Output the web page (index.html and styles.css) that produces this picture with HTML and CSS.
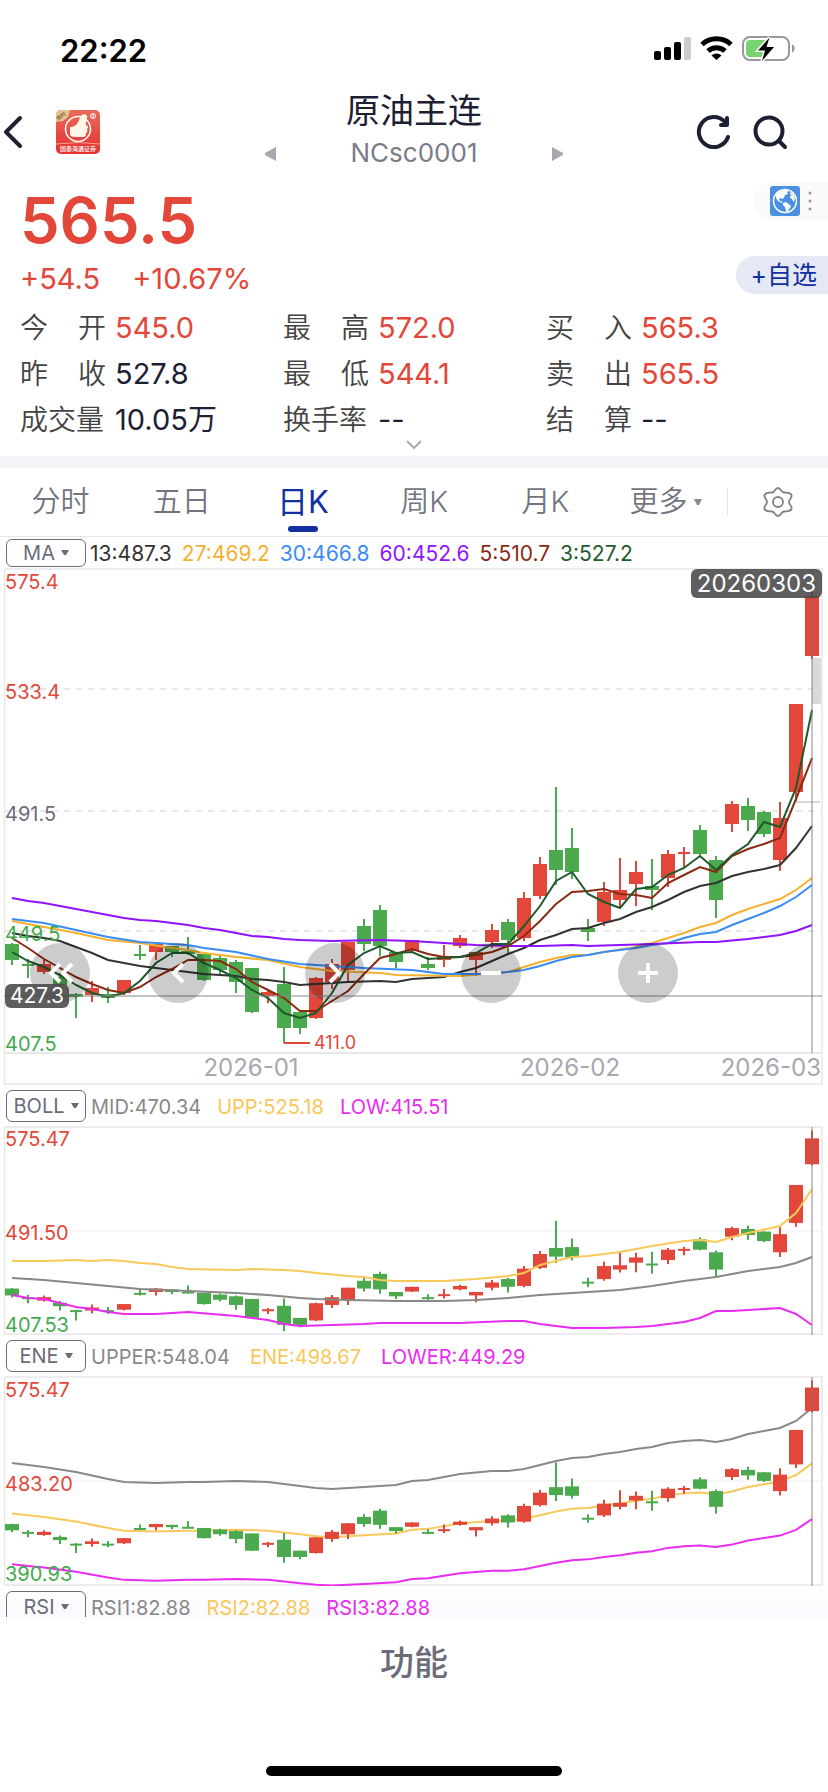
FILE: index.html
```html
<!DOCTYPE html>
<html lang="zh-CN">
<head>
<meta charset="utf-8">
<meta name="viewport" content="width=device-width, initial-scale=1">
<title>原油主连 NCsc0001</title>
<link rel="stylesheet" href="styles.css">
</head>
<body>
<div class="status">
  <time class="clock">22:22</time>
  <svg class="status-icons" width="144" height="28" viewBox="0 0 144 28" aria-hidden="true">
    <g fill="#000"><rect x="1" y="15" width="7" height="9" rx="2"/><rect x="11" y="11" width="7" height="13" rx="2"/><rect x="21" y="6" width="7" height="18" rx="2"/></g>
    <rect x="31" y="1" width="7" height="23" rx="2" fill="#ccc"/>
    <g fill="none" stroke="#000" stroke-width="5"><path d="M49 8.500a21.500 21.500 0 0 1 29 0"/><path d="M55 15a12.500 12.500 0 0 1 17 0"/></g>
    <path d="M58.500 19.500a7 7 0 0 1 10 0L63.500 24Z"/>
    <rect x="90" y="1" width="46" height="23" rx="7" fill="none" stroke="#999" stroke-width="2"/>
    <path d="M97 4h18v17H97a4 4 0 0 1-4-4V8a4 4 0 0 1 4-4Z" fill="#76d572"/>
    <path d="M139 8.500c3.500 1 3.500 7 0 8Z" fill="#999"/>
    <path d="M116.500 1.500 105 14.500h7l-3 10.500 12-14h-7.500Z" fill="#000" stroke="#fff" stroke-width="3" paint-order="stroke"/>
  </svg>
</div>

<header class="header">
  <div class="header-side">
    <button class="icon-btn" aria-label="返回"><svg width="24" height="36" viewBox="0 0 24 36"><path d="M20 4 6 18l14 14" fill="none" stroke="#1d2033" stroke-width="4" stroke-linecap="round" stroke-linejoin="round"/></svg></button>
    <svg class="logo" width="44" height="44" viewBox="0 0 44 44" role="img" aria-label="国泰海通证券">
      <defs><linearGradient id="lg" x2="0" y2="1"><stop stop-color="#ea6a5c"/><stop offset="1" stop-color="#e5302e"/></linearGradient><clipPath id="lc"><rect width="44" height="44" rx="5"/></clipPath></defs>
      <g clip-path="url(#lc)">
        <rect width="44" height="44" fill="url(#lg)"/>
        <path d="M0 0h14L12 7 7 11 0 12Z" fill="#e3c48c"/>
        <text class="logo-tag" x="1" y="9" transform="rotate(-38 4 8)">限时</text>
        <circle cx="22" cy="19" r="12.500" fill="none" stroke="#fff" stroke-width="1.500"/>
        <path d="M15 17c4 0 8-4 9-10 1-3 6-4 7-1 1 3-2 6-1 9 3 1 2 3 1 4 1 2 0 4-1 4 0 3-1 4-3 4H19c-3 0-5-1-5-3v-7Z" fill="#fff6ea"/>
        <circle cx="37" cy="6" r="2.500" fill="none" stroke="#fff"/><path d="M37 4v4" stroke="#fff"/>
        <path d="M0 34q22-3 44 0" fill="none" stroke="#ffb9a9" stroke-width=".800"/>
        <text class="logo-name" x="22" y="41" text-anchor="middle">国泰海通证券</text>
      </g>
    </svg>
  </div>
  <div class="header-title">
    <button class="step" aria-label="上一个"><svg width="12" height="14" viewBox="0 0 12 14"><path d="M11 0v14L0 8V6Z" fill="#a6a7af"/></svg></button>
    <div class="names"><h1 class="name">原油主连</h1><span class="code">NCsc0001</span></div>
    <button class="step" aria-label="下一个"><svg width="12" height="14" viewBox="0 0 12 14"><path d="M1 0v14l11-6V6Z" fill="#a6a7af"/></svg></button>
  </div>
  <div class="header-side header-actions">
    <button class="icon-btn" aria-label="刷新"><svg width="36" height="36" viewBox="0 0 36 36"><g fill="none" stroke="#1d2033" stroke-width="4" stroke-linecap="round" stroke-linejoin="round"><path d="M32 23a15 15 0 1 1-3-15"/><path d="M31 4v7h-6" /></g></svg></button>
    <button class="icon-btn" aria-label="搜索"><svg width="36" height="36" viewBox="0 0 36 36"><g fill="none" stroke="#1d2033" stroke-width="4" stroke-linecap="round"><circle cx="17" cy="17" r="13.500"/><path d="m27 27 6 6"/></g></svg></button>
  </div>
</header>

<main>
<section class="quote">
  <div class="quote-top">
    <div>
      <div class="price">565.5</div>
      <div class="change"><span>+54.5</span><span>+10.67%</span></div>
    </div>
    <div class="quote-actions">
      <button class="world" aria-label="全球行情">
        <svg width="30" height="30" viewBox="0 0 30 30"><rect width="30" height="30" rx="3" fill="#4a90e2"/><circle cx="15" cy="15" r="11.500" fill="none" stroke="#fff" stroke-width="1.500"/><path d="M6 9c2-3 5-5 8-5l3 0 2 1-2 1 1 2-3 1-1 3-2 1-1-1-2 1 1 2 3 1-1 1-4-2-2-3ZM20 6l3 2 2 4-1 4-1-1-1-2-2-1v-2l2-1-2-1ZM13 17l3-1 5 4-1 2-3 4-1-1-1-4-2-2Z" fill="#fff"/></svg>
        <svg width="4" height="22" viewBox="0 0 4 22"><g fill="#999"><circle cx="2" cy="3" r="1.500"/><circle cx="2" cy="11" r="1.500"/><circle cx="2" cy="19" r="1.500"/></g></svg>
      </button>
      <button class="fav">+自选</button>
    </div>
  </div>
  <dl class="stats">
    <div class="stat"><dt><span>今</span><span>开</span></dt><dd class="up">545.0</dd></div>
    <div class="stat"><dt><span>最</span><span>高</span></dt><dd class="up">572.0</dd></div>
    <div class="stat"><dt><span>买</span><span>入</span></dt><dd class="up">565.3</dd></div>
    <div class="stat"><dt><span>昨</span><span>收</span></dt><dd>527.8</dd></div>
    <div class="stat"><dt><span>最</span><span>低</span></dt><dd class="up">544.1</dd></div>
    <div class="stat"><dt><span>卖</span><span>出</span></dt><dd class="up">565.5</dd></div>
    <div class="stat"><dt>成交量</dt><dd>10.05万</dd></div>
    <div class="stat"><dt>换手率</dt><dd>--</dd></div>
    <div class="stat"><dt><span>结</span><span>算</span></dt><dd>--</dd></div>
  </dl>
  <button class="expand" aria-label="展开"><svg width="16" height="10" viewBox="0 0 16 10"><path d="m1 1 7 7 7-7" fill="none" stroke="#aaa" stroke-width="2"/></svg></button>
</section>

<nav class="tabs">
  <button class="tab">分时</button>
  <button class="tab">五日</button>
  <button class="tab active">日K</button>
  <button class="tab">周K</button>
  <button class="tab">月K</button>
  <button class="tab more">更多<svg width="10" height="8" viewBox="0 0 10 8"><path d="M1 1h8L6 7H4Z" fill="#8a8a8e"/></svg></button>
  <button class="settings" aria-label="设置"><svg width="30" height="30" viewBox="0 0 30 30"><g fill="none" stroke="#808088" stroke-width="1.800" stroke-linejoin="round"><path d="M15 1C18 1 18 5 21 5.500 24 6 27 5 28.500 8 29.500 11 26 12 26 15s3.500 4 2.500 7C27 25 24 24 21 24.500 18 25 18 29 15 29S12 25 9 24.500C6 24 3 25 1.500 22 .5 19 4 18 4 15S.5 11 1.500 8C3 5 6 6 9 5.500 12 5 12 1 15 1Z"/><circle cx="15" cy="15" r="5"/></g></svg></button>
</nav>

<section class="panel">
  <div class="legend legend-main"><button class="picker">MA<svg width="8" height="6" viewBox="0 0 8 6"><path d="M0 0h8L5 5H3Z" fill="#6b6c7b"/></svg></button>
    <span class="black">13:487.3</span><span class="orange">27:469.2</span><span class="blue">30:466.8</span><span class="purple">60:452.6</span><span class="brown">5:510.7</span><span class="green">3:527.2</span></div>
  <div class="chart">
    <svg id="main-chart" viewBox="0 568 828 517"></svg>
    <button class="round b1" aria-label="最左"><svg width="30" height="30" viewBox="0 0 30 30"><path d="M15 6 6 15l9 9M27 6l-9 9 9 9"/></svg></button>
    <button class="round b2" aria-label="左移"><svg width="30" height="30" viewBox="0 0 30 30"><path d="M20 6l-9 9 9 9"/></svg></button>
    <button class="round b3" aria-label="右移"><svg width="30" height="30" viewBox="0 0 30 30"><path d="m10 6 9 9-9 9"/></svg></button>
    <button class="round b4" aria-label="缩小"><svg width="30" height="30" viewBox="0 0 30 30"><path d="M5 15h20"/></svg></button>
    <button class="round b5" aria-label="放大"><svg width="30" height="30" viewBox="0 0 30 30"><path d="M5 15h20M15 5v20"/></svg></button>
    <span class="tip tip-date">20260303</span>
    <span class="tip tip-price">427.3</span>
  </div>
</section>

<section class="panel">
  <div class="legend"><button class="picker">BOLL<svg width="8" height="6" viewBox="0 0 8 6"><path d="M0 0h8L5 5H3Z" fill="#6b6c7b"/></svg></button>
    <span class="gray">MID:470.34</span><span class="gold">UPP:525.18</span><span class="magenta">LOW:415.51</span></div>
  <div class="chart"><svg id="boll-chart" viewBox="0 1126 828 209"></svg></div>
</section>

<section class="panel">
  <div class="legend"><button class="picker">ENE<svg width="8" height="6" viewBox="0 0 8 6"><path d="M0 0h8L5 5H3Z" fill="#6b6c7b"/></svg></button>
    <span class="gray wide">UPPER:548.04</span><span class="gold wide">ENE:498.67</span><span class="magenta">LOWER:449.29</span></div>
  <div class="chart"><svg id="ene-chart" viewBox="0 1376 828 210"></svg></div>
</section>

<section class="panel cut">
  <div class="legend"><button class="picker">RSI<svg width="8" height="6" viewBox="0 0 8 6"><path d="M0 0h8L5 5H3Z" fill="#6b6c7b"/></svg></button>
    <span class="gray">RSI1:82.88</span><span class="gold">RSI2:82.88</span><span class="magenta">RSI3:82.88</span></div>
</section>
</main>

<footer class="footer">
  <button class="func">功能</button>
  <div class="home-bar"></div>
</footer>
<script src="chart.js"></script>
</body>
</html>
```

FILE: styles.css
```css
* { box-sizing: border-box; }
body {
  margin: 0;
  min-height: 100vh;
  display: flex;
  flex-direction: column;
  background: #fff;
  color: #1d2033;
  font-family: Inter, "Noto Sans CJK SC", sans-serif;
}
button {
  margin: 0;
  padding: 0;
  border: 0;
  background: none;
  color: inherit;
  font: inherit;
}
svg { display: block; }

.status {
  display: flex;
  align-items: center;
  justify-content: space-between;
  height: 100px;
  padding: 0 31px 0 60px;
}
.clock { color: #000; font-size: 31px; font-weight: 600; }

.header {
  display: grid;
  grid-template-columns: 1fr auto 1fr;
  align-items: center;
  height: 76px;
  padding: 0 40px 0 0;
}
.header-side { display: flex; align-items: center; gap: 32px; margin-top: -12px; }
.header-actions { justify-content: flex-end; gap: 20px; }
.header-title { display: flex; align-items: flex-end; gap: 69px; margin: -6px 0 0 40px; }
.names { display: flex; flex-direction: column; align-items: center; }
.name { margin: -8px 0 0; font-size: 34px; line-height: 44px; font-weight: 400; }
.code { color: #7b7c88; font-size: 26px; line-height: 40px; }
.step { height: 38px; }
.logo-tag { font-size: 5px; fill: #5a3a18; }
.logo-name { font-size: 6px; font-weight: 500; fill: #fff; }

.quote { border-bottom: 12px solid #f4f5f9; height: 292px; display: flex; flex-direction: column; }
.quote-top { display: flex; justify-content: space-between; padding-left: 20px; }
.price { color: #e2473a; font-size: 63px; line-height: 76px; font-weight: 600; padding-top: 6px; }
.change { display: flex; gap: 32px; color: #e2473a; font-size: 29px; line-height: 42px; }
.quote-actions { display: flex; flex-direction: column; align-items: flex-end; gap: 36px; padding-top: 6px; }
.world {
  display: flex;
  align-items: center;
  gap: 8px;
  height: 38px;
  padding: 0 16px;
  border-radius: 20px 0 0 20px;
  background: #fafafa;
}
.fav {
  height: 38px;
  padding: 0 11px 0 14px;
  border-radius: 20px 0 0 20px;
  background: #e5e8f5;
  color: #1230a0;
  font-size: 25px;
  line-height: 38px;
}
.stats {
  display: grid;
  grid-template-columns: repeat(3, 1fr);
  margin: 5px 19px 0 20px;
  font-size: 28px;
  line-height: 46px;
}
.stat { display: flex; gap: 9px; height: 46px; }
dt { display: flex; justify-content: space-between; width: 86px; color: #444; font-weight: 350; }
dd { margin: 0; font-size: 29px; }
.up { color: #e2473a; }
.expand { align-self: center; margin-top: -3px; }

.tabs { display: flex; align-items: center; height: 69px; border-bottom: 1px solid #e6e6e8; }
.tab {
  display: flex;
  flex: 1;
  flex-direction: column;
  align-items: center;
  height: 68px;
  color: #73747f;
  font-size: 29px;
  font-weight: 350;
  line-height: 68px;
}
.tab.active { color: #1230a0; font-size: 31px; font-weight: 400; }
.tab.active::after { content: ""; width: 30px; height: 6px; margin-top: -10px; border-radius: 3px; background: #1230a0; }
.tab.more { flex-direction: row; justify-content: center; gap: 6px; }
.settings { display: flex; justify-content: center; align-items: center; width: 101px; height: 28px; border-left: 1px solid #e6e6e8; }

.legend { display: flex; align-items: center; gap: 16px; height: 41px; padding-left: 6px; font-size: 20px; line-height: 20px; white-space: nowrap; }
.legend span { padding-top: 2px; }
.legend-main { gap: 10px; height: 31px; }
.picker {
  display: flex;
  flex: none;
  align-items: center;
  justify-content: center;
  gap: 6px;
  width: 80px;
  height: 32px;
  margin-right: -11px;
  border: 1px solid #6b6c7b;
  border-radius: 6px;
  color: #6b6c7b;
}
.legend-main .picker { height: 28px; margin-right: -6px; }
.legend-main span { font-size: 21px; }
.wide { margin-right: 4px; }
.black { color: #333; }
.orange { color: #f5b02e; }
.blue { color: #3a8cf5; }
.purple { color: #9013fe; }
.brown { color: #8b2a12; }
.green { color: #1e5a2c; }
.gray { color: #888; }
.gold { color: #f8c85a; }
.magenta { color: #e82df0; }

.chart { position: relative; }
.chart > svg { width: 100%; height: auto; }
.axis { font-size: 20px; }
.axis-date { font-size: 24px; fill: #a6a7af; }
.low-mark { font-size: 18px; fill: #e2473a; }
.round {
  position: absolute;
  top: 72.5%;
  display: grid;
  place-items: center;
  width: 60px;
  height: 60px;
  border-radius: 50%;
  background: rgba(0, 0, 0, .2);
}
.round path { fill: none; stroke: #fff; stroke-width: 4; }
.b1 { left: 3.6%; }
.b2 { left: 17.9%; }
.b3 { left: 36.8%; }
.b4 { left: 55.7%; }
.b5 { left: 74.6%; }
.tip {
  position: absolute;
  border-radius: 6px;
  background: rgba(70, 70, 70, .87);
  color: #fff;
  text-align: center;
}
.tip-date { top: 1px; right: 6px; padding: 1px 6px 0; font-size: 24px; line-height: 28px; }
.tip-price { top: 80.5%; left: 5px; padding: 0 5px; font-size: 21px; line-height: 24px; }

.cut { height: 31px; overflow: hidden; background: linear-gradient(#fff, #fafafe); }
.footer {
  display: flex;
  flex: 1;
  flex-direction: column;
  align-items: center;
  justify-content: space-between;
  padding: 20px 0 16px;
}
.func { color: #6b6c7b; font-size: 34px; line-height: 52px; font-weight: 500; }
.home-bar { width: 296px; height: 10px; border-radius: 5px; background: #000; }
```

FILE: chart.js
```js
// Each candle: direction, high, body top, body bottom, low, in main chart units.
const candles = `g 943 944 960 965|g 959 964 966 978|r 960 964 972 974|g 973 977 985 995|g 993 994 997 1018|r 981 988 995 1002|g 987 994 998 1003|r 980 980 993 995|g 945 954 956 960|r 943 944 952 960|g 946 946 952 957|g 937 951 954 955|g 954 954 980 981|g 956 958 970 974|g 960 962 982 993|g 968 968 1012 1013|r 989 992 996 1003|g 967 984 1028 1043|g 1012 1012 1028 1034|r 977 978 1018 1019|r 959 964 982 989|r 942 942 970 982|g 919 926 944 951|g 905 910 946 956|g 952 952 962 968|r 940 940 951 952|g 957 964 968 970|r 945 957 960 967|r 935 938 946 948|r 952 952 960 976|r 924 930 942 948|g 919 922 940 953|r 892 898 938 941|r 857 864 896 899|g 787 850 870 885|g 828 848 872 879|g 919 928 932 941|r 882 892 922 926|r 858 890 900 907|r 861 872 884 906|g 859 886 890 910|r 850 854 878 887|r 847 852 854 867|g 825 830 854 855|g 856 860 900 918|r 801 804 824 832|g 798 806 820 831|g 811 812 834 837|r 802 818 860 871|r 704 704 792 801|r 578 596 656 659`
  .split('|').map(s => { const [c, ...v] = s.split(' '); return [c, ...v.map(Number)]; });

const parse = s => s.split(' ').map(p => p.split(':').map(Number));

const averages = [
  ['#333', '12:933 28:936 44:938 60:941 76:947 92:953 108:960 124:963 140:966 156:968 172:970 204:974 236:976 252:979 268:980 284:982 300:985 316:984 332:983 348:982 380:981 396:982 412:979 428:978 444:977 460:972 476:968 492:961 508:954 524:948 540:940 556:935 572:929 588:928 604:923 620:919 636:912 652:907 668:900 684:892 700:886 716:883 732:876 748:872 764:869 780:865 796:848 812:826'],
  ['#f5b02e', '12:921 44:927 60:930 76:933 108:940 140:943 172:948 188:950 204:953 236:957 268:960 300:967 332:971 380:973 396:975 460:976 508:972 524:967 540:962 556:958 572:955 588:955 604:952 636:947 652:943 668:938 684:933 700:927 716:923 732:915 748:909 764:904 780:899 796:890 812:878'],
  ['#3a8cf5', '12:919 44:923 76:930 108:937 140:942 172:944 188:945 204:948 236:952 268:959 300:964 332:966 364:968 412:970 444:974 480:974 508:972 524:970 540:966 556:961 572:957 588:955 604:952 636:948 652:945 668:943 684:938 700:934 716:932 732:925 748:919 764:913 780:906 796:897 812:885'],
  ['#9013fe', '12:898 28:901 44:903 60:906 76:909 92:912 108:915 124:918 140:920 156:921 172:923 188:925 204:928 220:930 236:933 252:936 268:937 284:939 300:940 332:941 380:940 412:941 444:943 476:945 508:946 540:946 572:945 588:946 620:945 652:944 700:942 716:942 748:939 780:935 796:931 812:925'],
  ['#8b2a12', '12:938 28:948 44:959 60:968 76:977 92:984 108:990 124:993 140:987 156:977 172:969 188:960 204:960 220:961 236:969 252:982 268:990 284:998 300:1011 316:1011 332:1001 348:991 364:974 380:958 396:954 412:949 428:954 444:957 460:957 476:955 492:952 508:946 524:936 540:921 556:904 572:892 588:891 604:889 620:894 636:895 652:898 668:883 684:875 700:867 716:872 732:856 748:849 764:844 780:838 796:799 812:758'],
  ['#1e5a2c', '12:952 28:961 44:967 60:975 76:985 92:993 108:997 124:993 140:981 156:963 172:953 188:953 204:963 220:970 236:978 252:990 268:998 284:1013 300:1018 316:1013 332:993 348:965 364:953 380:946 396:953 412:952 428:959 444:958 460:957 476:953 492:944 508:944 524:926 540:906 556:881 572:872 588:894 604:902 620:908 636:889 652:887 668:875 684:868 700:856 716:870 732:855 748:844 764:822 780:827 796:788 812:710'],
];
const boll = [
  ['#f8c85a', '12:1261 44:1261 76:1260 92:1261 108:1260 124:1261 140:1263 156:1264 172:1267 188:1269 236:1270 252:1269 284:1270 300:1271 316:1273 348:1276 364:1277 380:1280 396:1281 444:1281 476:1279 508:1276 524:1273 540:1265 556:1261 572:1257 588:1256 620:1252 636:1249 652:1246 684:1241 700:1240 716:1242 732:1237 748:1233 780:1226 796:1213 812:1189'],
  ['#888', '12:1278 44:1280 76:1283 108:1286 140:1289 188:1291 236:1293 268:1295 300:1298 316:1299 348:1300 396:1301 444:1301 476:1300 508:1298 540:1295 572:1293 588:1292 620:1290 652:1286 684:1281 716:1277 748:1271 780:1267 796:1263 812:1257'],
  ['#e82df0', '12:1295 28:1298 44:1299 60:1303 76:1307 92:1309 108:1312 124:1314 156:1314 188:1312 236:1316 268:1320 284:1324 300:1326 332:1325 364:1324 380:1323 460:1323 508:1321 524:1321 540:1324 572:1328 604:1328 636:1327 652:1326 668:1324 684:1322 700:1318 716:1311 732:1311 780:1308 796:1314 812:1325'],
];
const eneUpper = parse('12:1463 28:1465 44:1467 76:1472 108:1479 124:1482 156:1483 188:1482 204:1482 236:1481 268:1482 284:1484 300:1486 316:1488 332:1489 348:1488 364:1487 396:1485 412:1481 428:1480 444:1477 460:1474 492:1471 508:1471 524:1469 540:1465 556:1461 572:1458 588:1457 604:1454 620:1452 636:1449 652:1447 668:1443 684:1441 700:1440 716:1442 732:1439 748:1434 764:1431 780:1428 796:1421 812:1408');

const price = y => 575.4 - (y - 568) / 2.884;
const bollY = y => 1126.2 + (575.47 - price(y)) * 1.2445;
const eneScale = p => 1376.5 + (575.47 - p) * 1.131;
const eneY = y => eneScale(price(y));

const line = (x1, y1, x2, y2, c, w, extra = '') => `<line x1="${x1}" y1="${y1}" x2="${x2}" y2="${y2}" stroke="${c}" stroke-width="${w}" ${extra}/>`;
const poly = (c, pts) => `<polyline points="${pts.map(p => p.join(',')).join(' ')}" fill="none" stroke="${c}" stroke-width="2"/>`;
const text = (x, y, t, fill, cls = 'axis', anchor = 'start') => `<text x="${x}" y="${y}" class="${cls}" text-anchor="${anchor}" ${fill ? `fill="${fill}"` : ''}>${t}</text>`;
const frame = (top, bottom) => `<path d="M822 ${top}H4.500V${bottom}H822Z" fill="none" stroke="#e8e8ea" stroke-width="1.500"/>`;
const RED = '#e2473a', GREEN = '#4caa4e', GREEN_TEXT = '#43aa50';

function drawCandles(map) {
  return candles.map(([c, h, t, b, l], i) => {
    const x = 12 + 16 * i, col = c === 'r' ? RED : GREEN;
    const top = map(t), height = Math.max(2, map(b) - top);
    const width = height < 2.5 ? 12 : 14;
    return line(x, map(h), x, map(l), col, 2) + `<rect x="${x - width / 2}" y="${top}" width="${width}" height="${height}" fill="${col}"/>`;
  }).join('');
}

document.getElementById('main-chart').innerHTML =
  frame(569, 1084) + line(4, 1053, 822, 1053, '#e8e8ea', 2) +
  [689, 811, 931].map(y => line(4, y, 822, y, '#e8e8ea', 2, 'stroke-dasharray="6 6"')).join('') +
  '<rect x="812" y="658" width="9" height="46" fill="#d8dadd"/>' + line(796, 802, 820, 802, '#d4d9df', 2) +
  drawCandles(y => y) +
  averages.map(([c, s]) => poly(c, parse(s))).join('') +
  line(4, 996, 822, 996, '#888', 1) + line(812, 569, 812, 1053, 'rgba(120,120,120,.45)', 2) +
  line(284, 1043, 310, 1043, RED, 2) + text(314, 1049, '411.0', '', 'low-mark') +
  text(5, 589, '575.4', RED) + text(5, 699, '533.4', RED) + text(5, 821, '491.5', '#6b6c7b') +
  text(5, 941, '449.5', GREEN_TEXT) + text(5, 1051, '407.5', GREEN_TEXT) +
  text(251, 1076, '2026-01', '', 'axis-date', 'middle') + text(570, 1076, '2026-02', '', 'axis-date', 'middle') +
  text(821, 1076, '2026-03', '', 'axis-date', 'end');

document.getElementById('boll-chart').innerHTML =
  frame(1127, 1334) + line(4, 1231, 822, 1231, '#eee', 1) + drawCandles(bollY) +
  boll.map(([c, s]) => poly(c, parse(s))).join('') + line(812, 1127, 812, 1335, 'rgba(120,120,120,.45)', 2) +
  text(5, 1146, '575.47', RED) + text(5, 1240, '491.50', RED) + text(5, 1332, '407.53', GREEN_TEXT);

const eneLine = ratio => eneUpper.map(([x, y]) => [x, eneScale((575.47 - (y - 1377) / 1.131) * ratio)]);
document.getElementById('ene-chart').innerHTML =
  frame(1377, 1585) + line(4, 1481, 822, 1481, '#eee', 1) +
  poly('#888', eneUpper) + poly('#f8c85a', eneLine(.9099)) + drawCandles(eneY) + poly('#e82df0', eneLine(.8198)) +
  line(812, 1377, 812, 1586, 'rgba(120,120,120,.45)', 2) +
  text(5, 1397, '575.47', RED) + text(5, 1491, '483.20', RED) + text(5, 1581, '390.93', GREEN_TEXT);
```
